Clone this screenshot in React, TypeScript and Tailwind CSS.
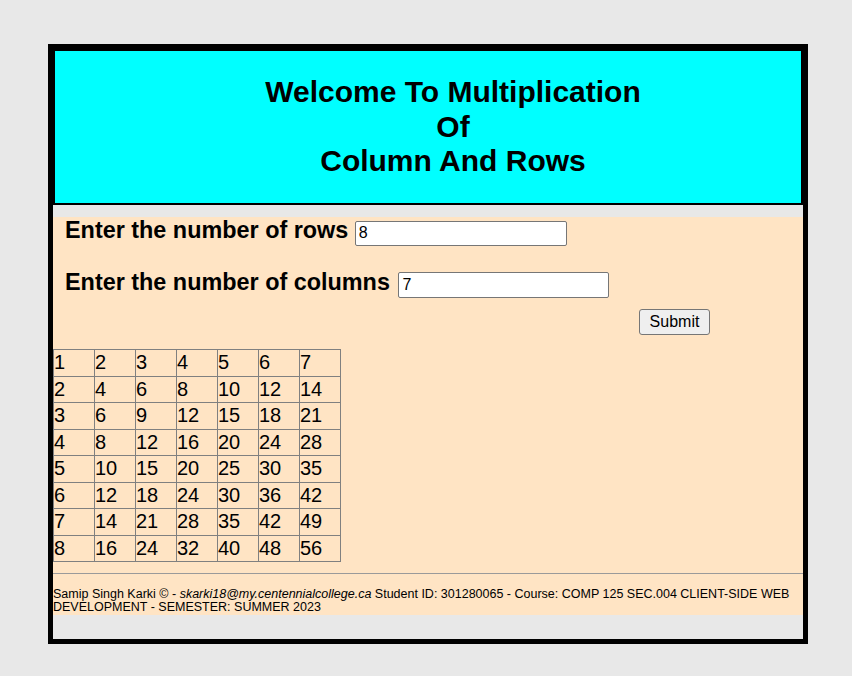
import React from "react";

export default function App() {
  const rows = 8;
  const cols = 7;
  const cells: number[] = [];
  for (let r = 1; r <= rows; r++) {
    for (let c = 1; c <= cols; c++) {
      cells.push(r * c);
    }
  }
  return (
    <div className="min-h-screen bg-[#e8e8e8] pt-[44px] pb-[33px] font-['Liberation_Sans',Arial,sans-serif] text-black">
      <div className="ml-[48px] w-[760px] border-[5px] border-black">
        <header className="border-2 border-black bg-[#00ffff] pt-[24px] pb-[24.5px] pl-[50px] text-center">
          <h1 className="text-[30px] font-bold leading-[34.5px]">
            Welcome To Multiplication
            <br />
            Of
            <br />
            Column And Rows
          </h1>
        </header>
        <main className="mt-[12px] mb-[24px] bg-[#ffe4c4]">
          <div className="pl-[12px] text-[23.4px] font-bold leading-[normal]">
            <label>Enter the number of rows</label>{" "}
            <input
              type="text"
              defaultValue="8"
              className="w-[212px] h-[25px] rounded-[2px] border border-[#767676] bg-white px-[3px] text-[16px] font-normal leading-[normal] align-baseline outline-none"
            />
          </div>
          <div className="mt-[23px] pl-[12px] text-[23.4px] font-bold leading-[normal]">
            <label>Enter the number of columns</label>{" "}
            <input
              type="text"
              defaultValue="7"
              className="ml-[2px] w-[211px] h-[26px] rounded-[2px] border border-[#767676] bg-white px-[3px] text-[16px] font-normal leading-[normal] align-baseline outline-none"
            />
          </div>
          <div className="mt-[11.5px] flex">
            <button className="ml-[586px] flex h-[26px] w-[71px] items-center justify-center rounded-[3px] border border-[#767676] bg-[#efefef] text-[16px] leading-[normal]">
              Submit
            </button>
          </div>
          <div className="mt-[14px] grid w-max grid-cols-[repeat(7,41px)] border-l border-t border-[#808080]">
            {cells.map((v, i) => (
              <div
                key={i}
                className="h-[26.5px] border-r border-b border-[#808080] pt-[1px] text-[20px] leading-[23px]"
              >
                {v}
              </div>
            ))}
          </div>
          <div className="mt-[11px] border-t border-[#9a9a9a]" />
          <footer className="pt-[13.7px] text-[12.5px] leading-[13.8px]">
            Samip Singh Karki © - <em>skarki18@my.centennialcollege.ca</em> Student ID: 301280065 - Course: COMP 125 SEC.004 CLIENT-SIDE WEB DEVELOPMENT - SEMESTER: SUMMER 2023
          </footer>
        </main>
      </div>
    </div>
  );
}
